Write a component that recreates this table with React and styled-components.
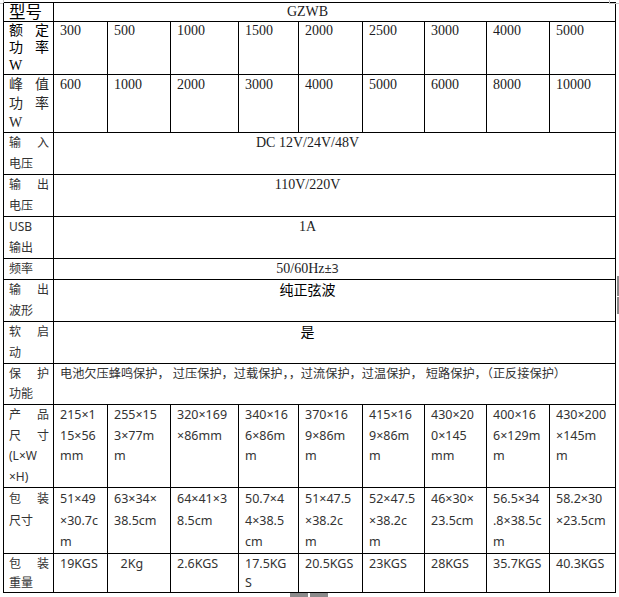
import React from "react";
import styled, { createGlobalStyle } from "styled-components";

const GlobalStyle = createGlobalStyle`
  html, body {
    margin: 0;
    padding: 0;
    background: #fff;
  }
`;

const SERIF = `"Liberation Serif", "Noto Sans CJK SC", serif`;
const SANS = `"Noto Sans", "Noto Sans CJK SC", sans-serif`;

const Page = styled.div`
  position: relative;
  width: 619px;
  height: 597px;
  padding: 2px 0 0 3px;
  box-sizing: border-box;
  overflow: hidden;
`;

const Table = styled.table`
  border-collapse: collapse;
  table-layout: fixed;
  width: 613px;
`;

const Row = styled.tr`
  height: ${(p) => p.$h}px;
`;

const Cell = styled.td`
  border: 1px solid #000;
  padding: ${(p) => (p.$center ? "0 54px 0 0" : "0 4px 0 6px")};
  vertical-align: top;
  text-align: ${(p) => (p.$center ? "center" : "left")};
  font-family: ${(p) => (p.$serif ? SERIF : SANS)};
  font-size: ${(p) => p.$size || (p.$serif ? 14 : 12.5)}px;
  line-height: ${(p) => p.$lh || 21}px;
  color: ${(p) => p.$color || (p.$serif ? "#1c1c24" : "#333")};
  white-space: nowrap;

  & > div {
    height: ${(p) => p.$lh || 21}px;
  }
`;

const LabelCell = styled.td`
  border: 1px solid #000;
  padding: 0 4px 0 5px;
  vertical-align: top;
  font-family: ${(p) => (p.$serif ? SERIF : SANS)};
  font-size: ${(p) => p.$size || 12}px;
  line-height: ${(p) => p.$lh || 21}px;
  color: ${(p) => p.$color || "#333"};
  white-space: nowrap;

  & > div {
    height: ${(p) => p.$lh || 21}px;
  }
`;

const Spread = styled.div`
  display: flex;
  justify-content: space-between;
`;

const Plain = styled.div``;

const SansBit = styled.span`
  font-family: ${SANS};
  font-size: 12.5px;
  color: #333;
`;

const Mark = styled.div`
  position: absolute;
  background: ${(p) => p.$c || "#8a8a8a"};
`;

const cols = [50, 54, 63, 68, 60, 64, 62, 62, 63, 66];

const Label = ({ lines, ...rest }) => (
  <LabelCell {...rest}>
    {lines.map((l, i) =>
      Array.isArray(l) ? (
        <Spread key={i}>
          {l.map((c, j) => (
            <span key={j}>{c}</span>
          ))}
        </Spread>
      ) : (
        <Plain key={i}>{l}</Plain>
      )
    )}
  </LabelCell>
);

const Multi = ({ lines, ...rest }) => (
  <Cell {...rest}>
    {lines.map((l, i) => (
      <Plain key={i}>{l}</Plain>
    ))}
  </Cell>
);

const Wide = ({ children, ...rest }) => (
  <Cell colSpan={9} {...rest}>
    <Plain>{children}</Plain>
  </Cell>
);

const rated = ["300", "500", "1000", "1500", "2000", "2500", "3000", "4000", "5000"];
const peak = ["600", "1000", "2000", "3000", "4000", "5000", "6000", "8000", "10000"];

const sizes = [
  ["215×1", "15×56", "mm"],
  ["255×15", "3×77m", "m"],
  ["320×169", "×86mm"],
  ["340×16", "6×86m", "m"],
  ["370×16", "9×86m", "m"],
  ["415×16", "9×86m", "m"],
  ["430×20", "0×145", "mm"],
  ["400×16", "6×129m", "m"],
  ["430×200", "×145m", "m"],
];

const pack = [
  ["51×49", "×30.7c", "m"],
  ["63×34×", "38.5cm"],
  ["64×41×3", "8.5cm"],
  ["50.7×4", "4×38.5", "cm"],
  ["51×47.5", "×38.2c", "m"],
  ["52×47.5", "×38.2c", "m"],
  ["46×30×", "23.5cm"],
  ["56.5×34", ".8×38.5c", "m"],
  ["58.2×30", "×23.5cm"],
];

const weight = [
  ["19KGS"],
  ["\u00a0\u00a02Kg"],
  ["2.6KGS"],
  ["17.5KG", "S"],
  ["20.5KGS"],
  ["23KGS"],
  ["28KGS"],
  ["35.7KGS"],
  ["40.3KGS"],
];

export default function App() {
  return (
    <Page>
      <GlobalStyle />
      <Table>
        <colgroup>
          {cols.map((w, i) => (
            <col key={i} style={{ width: w }} />
          ))}
        </colgroup>
        <tbody>
          <Row $h={19}>
            <Label lines={["型号"]} $size={16.5} $lh={18} $color="#000" />
            <Wide $center $serif $lh={18}>
              GZWB
            </Wide>
          </Row>
          <Row $h={53}>
            <Label lines={[["额", "定"], ["功", "率"], "W"]} $serif $size={14} $lh={17.33} $color="#000" />
            {rated.map((v) => (
              <Multi key={v} lines={[v]} $serif $lh={17.33} />
            ))}
          </Row>
          <Row $h={58}>
            <Label lines={[["峰", "值"], ["功", "率"], "W"]} $serif $size={14} $lh={19} $color="#2a2a2a" />
            {peak.map((v, i) => (
              <Multi key={i} lines={[v]} $serif $lh={19} />
            ))}
          </Row>
          <Row $h={42}>
            <Label lines={[["输", "入"], "电压"]} $lh={20.5} />
            <Wide $center $serif $lh={19}>
              DC 12V/24V/48V
            </Wide>
          </Row>
          <Row $h={42}>
            <Label lines={[["输", "出"], "电压"]} $lh={20.5} />
            <Wide $center $serif $lh={19}>
              110V/220V
            </Wide>
          </Row>
          <Row $h={42}>
            <Label lines={["USB", "输出"]} $lh={20.5} />
            <Wide $center $serif $lh={19}>
              1A
            </Wide>
          </Row>
          <Row $h={21}>
            <Label lines={["频率"]} $lh={20} />
            <Wide $center $serif $lh={20}>
              50/60Hz<SansBit>±3</SansBit>
            </Wide>
          </Row>
          <Row $h={42}>
            <Label lines={[["输", "出"], "波形"]} $lh={20.5} />
            <Wide $center $lh={20} $size={14} $color="#000">
              纯正弦波
            </Wide>
          </Row>
          <Row $h={42}>
            <Label lines={[["软", "启"], "动"]} $lh={20.5} />
            <Wide $center $lh={20} $size={14} $color="#000">
              是
            </Wide>
          </Row>
          <Row $h={41}>
            <Label lines={[["保", "护"], "功能"]} $lh={20} />
            <Wide $lh={20} $size={12.2}>
              电池欠压蜂鸣保护， 过压保护，过载保护，，过流保护，过温保护， 短路保护，（正反接保护）
            </Wide>
          </Row>
          <Row $h={83}>
            <Label lines={[["产", "品"], ["尺", "寸"], "(L×W", "×H)"]} $lh={20.5} />
            {sizes.map((l, i) => (
              <Multi key={i} lines={l} $lh={20.5} />
            ))}
          </Row>
          <Row $h={66}>
            <Label lines={[["包", "装"], "尺寸"]} $lh={21.6} />
            {pack.map((l, i) => (
              <Multi key={i} lines={l} $lh={21.6} />
            ))}
          </Row>
          <Row $h={39}>
            <Label lines={[["包", "装"], "重量"]} $lh={19} />
            {weight.map((l, i) => (
              <Multi key={i} lines={l} $lh={19} />
            ))}
          </Row>
        </tbody>
      </Table>
      <Mark $c="#c8c8c8" style={{ left: 0, top: 3, width: 3, height: 1 }} />
      <Mark $c="#c8c8c8" style={{ left: 3, top: 0, width: 1, height: 3 }} />
      <Mark $c="#c8c8c8" style={{ left: 609, top: 0, width: 1, height: 4 }} />
      <Mark $c="#c8c8c8" style={{ left: 609, top: 3, width: 10, height: 1 }} />
      <Mark style={{ left: 617, top: 276, width: 2, height: 20 }} />
      <Mark style={{ left: 617, top: 297, width: 2, height: 17 }} />
      <Mark style={{ left: 290, top: 593, width: 18, height: 4 }} />
      <Mark style={{ left: 310, top: 593, width: 18, height: 4 }} />
    </Page>
  );
}
